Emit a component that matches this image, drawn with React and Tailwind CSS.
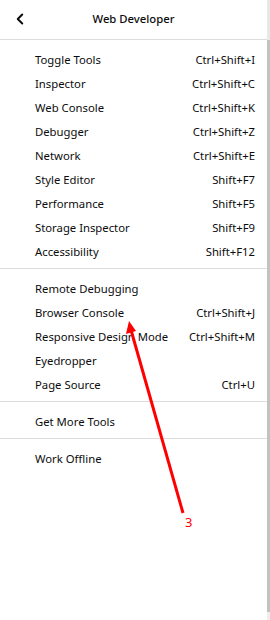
import { ChevronLeft } from 'lucide-react';

const groups = [
  [
    ['Toggle Tools', 'Ctrl+Shift+I'],
    ['Inspector', 'Ctrl+Shift+C'],
    ['Web Console', 'Ctrl+Shift+K'],
    ['Debugger', 'Ctrl+Shift+Z'],
    ['Network', 'Ctrl+Shift+E'],
    ['Style Editor', 'Shift+F7'],
    ['Performance', 'Shift+F5'],
    ['Storage Inspector', 'Shift+F9'],
    ['Accessibility', 'Shift+F12'],
  ],
  [
    ['Remote Debugging', ''],
    ['Browser Console', 'Ctrl+Shift+J'],
    ['Responsive Design Mode', 'Ctrl+Shift+M'],
    ['Eyedropper', ''],
    ['Page Source', 'Ctrl+U'],
  ],
  [['Get More Tools', '']],
  [['Work Offline', '']],
];

function Item({ label, keys }) {
  return (
    <div className="flex h-6 items-center justify-between pl-[35px] pr-[12px]">
      <span>{label}</span>
      <span>{keys}</span>
    </div>
  );
}

export default function App() {
  return (
    <div className="relative flex h-[620px] w-[270px] bg-white text-[11.3px] text-[#0c0c0d]" style={{ fontFamily: '"Noto Sans", "Open Sans", sans-serif' }}>
      <div className="flex-1">
        {/* Header */}
        <div className="relative flex h-10 items-center justify-center border-b border-[#dcdcdc]">
          <ChevronLeft className="absolute left-[11px] top-[10px] h-[18px] w-[18px]" strokeWidth={2.6} />
          <span className="font-medium">Web Developer</span>
        </div>

        {groups.map((g, i) => (
          <div key={i} className={`pt-2 pb-1 ${i < groups.length - 1 ? 'border-b border-[#dcdcdc]' : ''}`}>
            {g.map(([label, keys]) => (
              <Item key={label} label={label} keys={keys} />
            ))}
          </div>
        ))}
      </div>

      {/* scrollbar strip */}
      <div className="flex w-[3px] flex-col">
        <div className="h-10 bg-[#e8e8e8]" />
        <div className="h-[572px] bg-[#c2c2c2]" />
        <div className="flex-1 bg-[#eeeeee]" />
      </div>

      {/* annotation */}
      <svg className="pointer-events-none absolute left-0 top-0" width="270" height="620">
        <line x1="183" y1="513" x2="131" y2="330" stroke="#ff0000" strokeWidth="3" />
        <polygon points="129,321 126,334 136,331" fill="#ff0000" />
      </svg>
      <span className="absolute left-[185px] top-[513px] text-[13px] text-[#ff0000]">3</span>
    </div>
  );
}
